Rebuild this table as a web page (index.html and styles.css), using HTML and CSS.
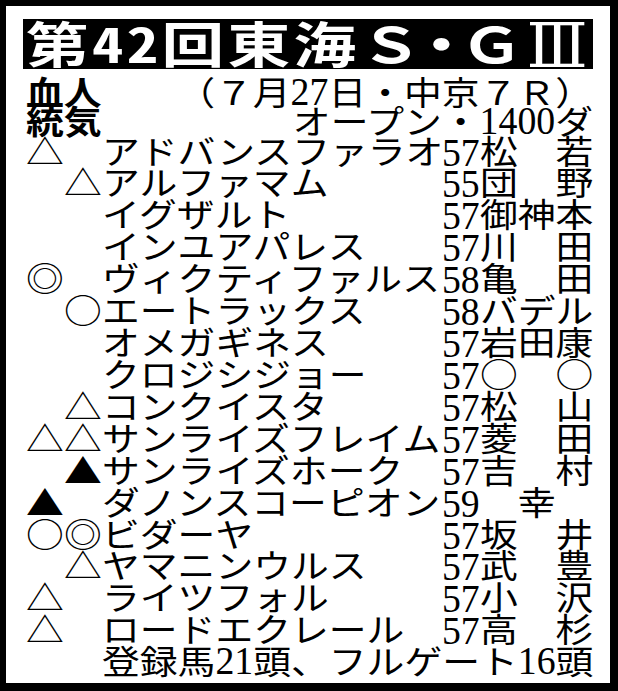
FILE: index.html
```html
<!DOCTYPE html>
<html lang="ja">
<head>
<meta charset="utf-8">
<title>第42回東海Ｓ・ＧⅢ</title>
<link rel="stylesheet" href="styles.css">
</head>
<body>
<div class="sheet">
  <div class="paper">
    <div class="title"><span class="title-t">第<span class="hw">42</span>回東海Ｓ<span class="dot">・</span>Ｇ<span class="roman">Ⅲ</span></span></div>
    <div class="hdr"><span class="t b">血人</span><span class="t r">（７月<span class="num n2">27</span>日・中京７Ｒ）</span></div>
    <div class="hdr"><span class="t b">統気</span><span class="t r">オープン・<span class="num n4">1400</span>ダ</span></div>
    <div class="horses">
      <div class="row"><span class="c"><span class="t">△</span></span><span class="c"></span><span class="c"><span class="t">アドバンスファラオ</span></span><span class="c"><span class="wt">57</span></span><span class="c"><span class="t">松　若</span></span></div>
      <div class="row"><span class="c"></span><span class="c"><span class="t">△</span></span><span class="c"><span class="t">アルファマム</span></span><span class="c"><span class="wt">55</span></span><span class="c"><span class="t">団　野</span></span></div>
      <div class="row"><span class="c"></span><span class="c"></span><span class="c"><span class="t">イグザルト</span></span><span class="c"><span class="wt">57</span></span><span class="c"><span class="t">御神本</span></span></div>
      <div class="row"><span class="c"></span><span class="c"></span><span class="c"><span class="t">インユアパレス</span></span><span class="c"><span class="wt">57</span></span><span class="c"><span class="t">川　田</span></span></div>
      <div class="row"><span class="c"><span class="t">◎</span></span><span class="c"></span><span class="c"><span class="t">ヴィクティファルス</span></span><span class="c"><span class="wt">58</span></span><span class="c"><span class="t">亀　田</span></span></div>
      <div class="row"><span class="c"></span><span class="c"><span class="t">○</span></span><span class="c"><span class="t">エートラックス</span></span><span class="c"><span class="wt">58</span></span><span class="c"><span class="t">バデル</span></span></div>
      <div class="row"><span class="c"></span><span class="c"></span><span class="c"><span class="t">オメガギネス</span></span><span class="c"><span class="wt">57</span></span><span class="c"><span class="t">岩田康</span></span></div>
      <div class="row"><span class="c"></span><span class="c"></span><span class="c"><span class="t">クロジシジョー</span></span><span class="c"><span class="wt">57</span></span><span class="c"><span class="t">○　○</span></span></div>
      <div class="row"><span class="c"></span><span class="c"><span class="t">△</span></span><span class="c"><span class="t">コンクイスタ</span></span><span class="c"><span class="wt">57</span></span><span class="c"><span class="t">松　山</span></span></div>
      <div class="row"><span class="c"><span class="t">△</span></span><span class="c"><span class="t">△</span></span><span class="c"><span class="t">サンライズフレイム</span></span><span class="c"><span class="wt">57</span></span><span class="c"><span class="t">菱　田</span></span></div>
      <div class="row"><span class="c"></span><span class="c"><span class="t">▲</span></span><span class="c"><span class="t">サンライズホーク</span></span><span class="c"><span class="wt">57</span></span><span class="c"><span class="t">吉　村</span></span></div>
      <div class="row"><span class="c"><span class="t">▲</span></span><span class="c"></span><span class="c"><span class="t">ダノンスコーピオン</span></span><span class="c"><span class="wt">59</span></span><span class="c"><span class="t">　幸</span></span></div>
      <div class="row"><span class="c"><span class="t">○</span></span><span class="c"><span class="t">◎</span></span><span class="c"><span class="t">ビダーヤ</span></span><span class="c"><span class="wt">57</span></span><span class="c"><span class="t">坂　井</span></span></div>
      <div class="row"><span class="c"></span><span class="c"><span class="t">△</span></span><span class="c"><span class="t">ヤマニンウルス</span></span><span class="c"><span class="wt">57</span></span><span class="c"><span class="t">武　豊</span></span></div>
      <div class="row"><span class="c"><span class="t">△</span></span><span class="c"></span><span class="c"><span class="t">ライツフォル</span></span><span class="c"><span class="wt">57</span></span><span class="c"><span class="t">小　沢</span></span></div>
      <div class="row"><span class="c"><span class="t">△</span></span><span class="c"></span><span class="c"><span class="t">ロードエクレール</span></span><span class="c"><span class="wt">57</span></span><span class="c"><span class="t">高　杉</span></span></div>
      <div class="foot"><span class="t">登録馬<span class="num n2">21</span>頭、フルゲート<span class="num n2">16</span>頭</span></div>
    </div>
  </div>
</div>
</body>
</html>
```
FILE: styles.css
```css
html, body {
  margin: 0;
  padding: 0;
}
body {
  width: 618px;
  height: 691px;
  background: #000;
  font-family: "Noto Sans CJK JP", "Noto Sans CJK SC", sans-serif;
  color: #000;
}
.sheet {
  box-sizing: border-box;
  width: 618px;
  height: 691px;
  background: #000;
  padding: 6px 8px 8px 6px;
}
.paper {
  box-sizing: border-box;
  height: 100%;
  background: #fff;
  padding: 13px 17px 0 20px;
  overflow: hidden;
}
.title {
  box-sizing: border-box;
  width: 570px;
  height: 50px;
  margin-left: -3px;
  margin-bottom: 7.5px;
  padding-left: 3px;
  background: #000;
}
.title-t {
  display: inline-block;
  color: #fff;
  font-size: 49px;
  line-height: 46px;
  font-weight: 700;
  letter-spacing: 2.6px;
  white-space: nowrap;
  transform: scaleX(1.28);
  transform-origin: 0 0;
}
.hw {
  font-feature-settings: "hwid" 1;
}
.dot {
  margin-left: -0.25em;
  margin-right: -0.25em;
}
.roman {
  display: inline-block;
  font-family: "DejaVu Serif", "Liberation Serif", serif;
  font-size: 62px;
  line-height: 20px;
  font-weight: 400;
  letter-spacing: 0;
  vertical-align: -4px;
  transform: scaleX(0.8);
  transform-origin: 0 0;
}
.t {
  display: inline-block;
  font-size: 33px;
  line-height: 31.93px;
  font-weight: 400;
  white-space: nowrap;
  transform: scaleX(1.1455);
  transform-origin: 0 0;
}
.t.r {
  transform-origin: 100% 0;
}
.t.b {
  font-weight: 700;
}
.hdr {
  display: flex;
  justify-content: space-between;
  height: 29px;
}
.hdr .t {
  line-height: 29px;
}
.num {
  display: inline-block;
  font-family: "Liberation Serif", serif;
  font-size: 41px;
  line-height: 20px;
  transform: scaleX(0.805);
  transform-origin: 0 0;
  white-space: nowrap;
}
.n2 { width: 33px; }
.n4 { width: 66px; }
.row {
  display: grid;
  grid-template-columns: 37.8px 37.8px 340.2px 37.8px 113.4px;
  height: 31.93px;
}
.c {
  display: block;
}
.wt {
  display: inline-block;
  padding-top: 2px;
  font-family: "Liberation Serif", serif;
  font-size: 41px;
  line-height: 31.93px;
  white-space: nowrap;
  transform: scaleX(0.92);
  transform-origin: 0 0;
}
.foot {
  height: 31.93px;
  padding-left: 75.6px;
}
```
